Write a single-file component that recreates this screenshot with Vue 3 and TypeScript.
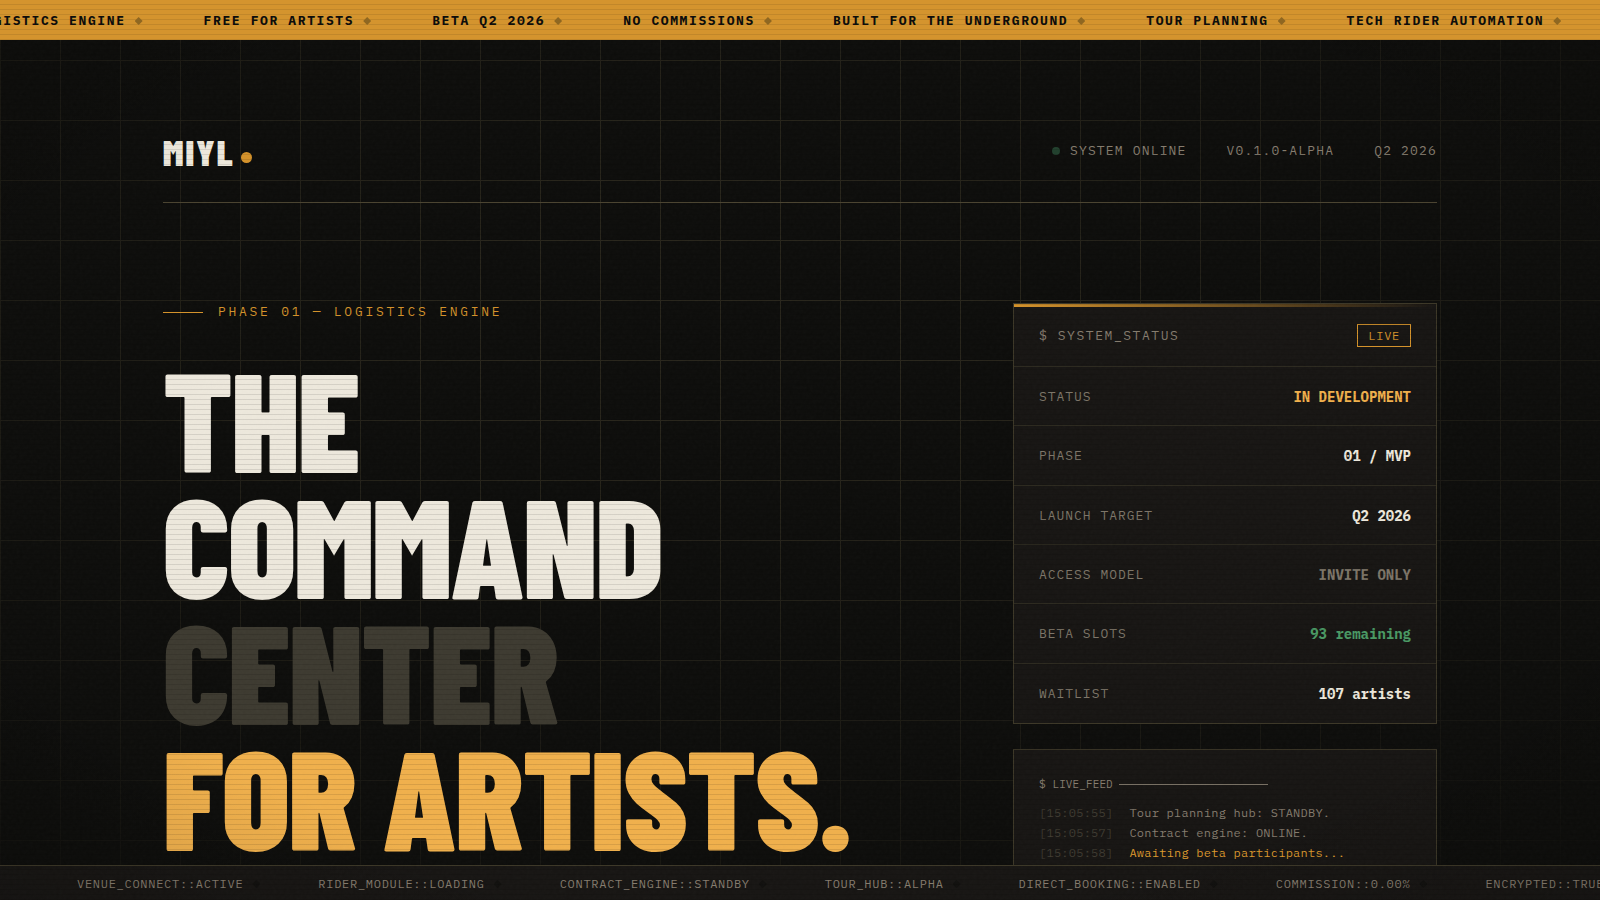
<script setup lang="ts">
interface StatusRow {
  label: string
  value: string
  tone: 'plain' | 'amber' | 'muted' | 'green'
}
interface LogLine {
  time: string
  message: string
  highlight?: boolean
}

const features: string[] = [
  'LOGISTICS ENGINE',
  'FREE FOR ARTISTS',
  'BETA Q2 2026',
  'NO COMMISSIONS',
  'BUILT FOR THE UNDERGROUND',
  'TOUR PLANNING',
  'TECH RIDER AUTOMATION',
]

const rows: StatusRow[] = [
  { label: 'STATUS', value: 'IN DEVELOPMENT', tone: 'amber' },
  { label: 'PHASE', value: '01 / MVP', tone: 'plain' },
  { label: 'LAUNCH TARGET', value: 'Q2 2026', tone: 'plain' },
  { label: 'ACCESS MODEL', value: 'INVITE ONLY', tone: 'muted' },
  { label: 'BETA SLOTS', value: '93 remaining', tone: 'green' },
  { label: 'WAITLIST', value: '107 artists', tone: 'plain' },
]

const log: LogLine[] = [
  { time: '[15:05:55]', message: 'Tour planning hub: STANDBY.' },
  { time: '[15:05:57]', message: 'Contract engine: ONLINE.' },
  { time: '[15:05:58]', message: 'Awaiting beta participants...', highlight: true },
]

const modules: string[] = [
  'VENUE_CONNECT::ACTIVE',
  'RIDER_MODULE::LOADING',
  'CONTRACT_ENGINE::STANDBY',
  'TOUR_HUB::ALPHA',
  'DIRECT_BOOKING::ENABLED',
  'COMMISSION::0.00%',
  'ENCRYPTED::TRUE',
]
</script>

<template>
  <div class="page">
    <div class="grid-layer" aria-hidden="true"></div>

    <ul class="ticker ticker-top">
      <li v-for="item in features" :key="item">{{ item }}<i class="diamond"></i></li>
    </ul>

    <div class="container">
      <header class="header">
        <a class="logo" href="#">MIYL<i class="logo-dot"></i></a>
        <div class="meta">
          <span class="online"><i class="pulse"></i>SYSTEM ONLINE</span>
          <span>V0.1.0-ALPHA</span>
          <span>Q2 2026</span>
        </div>
      </header>

      <main class="hero">
        <section class="intro">
          <p class="eyebrow">PHASE 01 — LOGISTICS ENGINE</p>
          <h1 class="title">
            <span>THE</span>
            <span>COMMAND</span>
            <span class="dim">CENTER</span>
            <span class="bright">FOR ARTISTS.</span>
          </h1>
        </section>

        <aside class="side">
          <section class="panel status">
            <div class="panel-head">
              <h2>$ SYSTEM_STATUS</h2>
              <span class="badge">LIVE</span>
            </div>
            <dl class="rows">
              <div v-for="row in rows" :key="row.label" class="row">
                <dt>{{ row.label }}</dt>
                <dd :class="row.tone">{{ row.value }}</dd>
              </div>
            </dl>
          </section>

          <section class="panel feed">
            <h2 class="feed-title">$ LIVE_FEED<i class="rule"></i></h2>
            <p v-for="line in log" :key="line.time" class="line" :class="{ highlight: line.highlight }">
              <time>{{ line.time }}</time>
              <span>{{ line.message }}</span>
            </p>
          </section>
        </aside>
      </main>
    </div>

    <ul class="ticker ticker-bottom">
      <li v-for="item in modules" :key="item">{{ item }}<i class="diamond"></i></li>
    </ul>

    <svg class="noise" aria-hidden="true">
      <filter id="grain">
        <feTurbulence type="fractalNoise" baseFrequency="0.3" numOctaves="3" stitchTiles="stitch" />
        <feColorMatrix type="saturate" values="0.3" />
      </filter>
      <rect width="100%" height="100%" filter="url(#grain)" />
    </svg>
    <div class="vignette" aria-hidden="true"></div>
    <div class="scanlines" aria-hidden="true"></div>
  </div>
</template>

<style>
body {
  margin: 0;
  background: #0d0d0b;
}
</style>

<style scoped>
.page {
  position: relative;
  height: 100vh;
  overflow: hidden;
  display: flex;
  flex-direction: column;
  background: #0d0d0b;
  color: #ede8dc;
  font-family: 'IBM Plex Mono', 'Liberation Mono', monospace;
  font-size: 13px;
  line-height: 20px;
}
.grid-layer,
.noise,
.vignette,
.scanlines {
  position: absolute;
  inset: 0;
  width: 100%;
  height: 100%;
  pointer-events: none;
}
.grid-layer {
  background-image:
    linear-gradient(#28251b 1px, transparent 1px),
    linear-gradient(90deg, #28251b 1px, transparent 1px);
  background-size: 60px 60px;
  mask-image: radial-gradient(ellipse 80% 80% at 45% 35%, #000 20%, rgba(0, 0, 0, 0.1) 100%);
}
.noise {
  z-index: 5;
  opacity: 0.025;
}
.vignette {
  z-index: 6;
  background: radial-gradient(ellipse at center, transparent 70%, rgba(0, 0, 0, 0.12) 100%);
}
.scanlines {
  z-index: 7;
  background: repeating-linear-gradient(transparent 0 4px, rgba(0, 0, 0, 0.1) 4px 5px);
}

.ticker {
  position: relative;
  z-index: 2;
  box-sizing: border-box;
  display: flex;
  flex: none;
  margin: 0;
  padding: 0;
  list-style: none;
  overflow: hidden;
  white-space: nowrap;
}
.ticker li {
  display: flex;
  align-items: center;
  flex: none;
}
.diamond {
  width: 8px;
  height: 8px;
  clip-path: polygon(50% 0, 100% 50%, 50% 100%, 0 50%);
}
.ticker-top {
  z-index: 8;
  height: 40px;
  padding-top: 2px;
  background:
    repeating-linear-gradient(transparent 0 4px, rgba(0, 0, 0, 0.09) 4px 5px),
    #d4942e;
  color: #0d0d0b;
  font-weight: 700;
  letter-spacing: 0.124em;
}
.ticker-top li:first-child {
  margin-left: -25px;
}
.ticker-top .diamond {
  margin: 0 61px 0 9px;
  background: #8f6721;
}
.ticker-bottom {
  height: 35px;
  margin-top: auto;
  padding: 2px 0 0 77px;
  border-top: 1px solid #3c3727;
  background: #171513;
  color: #857c6e;
  font-size: 12px;
  letter-spacing: 0.06em;
}
.ticker-bottom .diamond {
  margin: 0 58px 0 9px;
  background: #11100e;
}

.container {
  position: relative;
  z-index: 1;
  box-sizing: border-box;
  width: 100%;
  max-width: 1402px;
  min-height: 0;
  flex: 1;
  margin: 0 auto;
  padding: 96px 64px 0;
}
.header {
  display: flex;
  align-items: flex-start;
  justify-content: space-between;
  padding-bottom: 34px;
  border-bottom: 1px solid #4a4330;
}
.logo {
  display: flex;
  align-items: flex-end;
  color: inherit;
  text-decoration: none;
  font-family: 'Barlow Condensed', 'Roboto Condensed', sans-serif;
  font-size: 36px;
  font-weight: 900;
  line-height: 32px;
  letter-spacing: 0.06em;
}
.logo-dot {
  width: 11px;
  height: 11px;
  margin: 0 0 5px 6px;
  border-radius: 50%;
  background: #d4922a;
}
.meta {
  display: flex;
  gap: 40px;
  padding-top: 5px;
  color: #857c6e;
  letter-spacing: 0.09em;
}
.online {
  display: flex;
  align-items: center;
  gap: 10px;
}
.pulse {
  width: 8px;
  height: 8px;
  border-radius: 50%;
  background: #21402d;
}

.hero {
  display: grid;
  grid-template-columns: minmax(0, 1fr) 424px;
  gap: 64px;
  padding-top: 100px;
}
.eyebrow {
  display: flex;
  align-items: center;
  gap: 15px;
  margin: -1px 0 32px;
  color: #d4922a;
  letter-spacing: 0.21em;
}
.eyebrow::before {
  content: '';
  width: 40px;
  height: 1px;
  background: currentColor;
}
.title {
  margin: 0;
  font-family: 'Barlow Condensed', 'Roboto Condensed', sans-serif;
  font-size: 140px;
  font-weight: 900;
  line-height: 126px;
  letter-spacing: -0.01em;
  white-space: nowrap;
}
.title span {
  display: block;
}
.dim {
  color: #3d3a30;
}
.bright {
  color: #f0b04c;
}

.panel {
  position: relative;
  border: 1px solid #3c3727;
  background: #171513;
}
.panel h2 {
  margin: 0;
  font-size: 13px;
  font-weight: 400;
  color: #857c6e;
}
.status::before {
  content: '';
  position: absolute;
  top: 0;
  left: 0;
  right: 0;
  height: 3px;
  background: linear-gradient(90deg, #d4922a, transparent);
}
.panel-head {
  display: flex;
  align-items: center;
  justify-content: space-between;
  padding: 20px 25px 19px;
  border-bottom: 1px solid #2c291f;
}
.panel-head h2 {
  letter-spacing: 0.12em;
}
.badge {
  padding: 0 10px;
  border: 1px solid #d4922a;
  color: #d4922a;
  font-size: 12px;
  line-height: 21px;
  letter-spacing: 0.06em;
}
.rows {
  display: grid;
  grid-auto-rows: 1fr;
  min-height: 356px;
  margin: 0;
}
.row {
  display: flex;
  align-items: center;
  justify-content: space-between;
  padding: 2px 25px 0;
  border-bottom: 1px solid #2c291f;
}
.row:last-child {
  border-bottom: 0;
}
dt {
  color: #7d7568;
  letter-spacing: 0.075em;
}
dd {
  margin: 0;
  font-size: 14px;
  font-weight: 700;
}
.amber {
  color: #f0b04c;
}
.muted {
  color: #7d7568;
}
.green {
  color: #4a9a64;
}

.feed {
  margin-top: 25px;
  padding: 24px 25px;
  color: #857c6e;
  font-size: 12px;
}
.panel .feed-title {
  display: flex;
  align-items: center;
  gap: 6px;
  margin-bottom: 9px;
  font-size: 11px;
  letter-spacing: 0.01em;
}
.rule {
  width: 149px;
  height: 1px;
  background: currentColor;
}
.line {
  display: flex;
  gap: 16px;
  margin: 0;
  letter-spacing: 0.02em;
}
.line time {
  color: #3f3b31;
}
.highlight {
  color: #dd992d;
}
</style>
